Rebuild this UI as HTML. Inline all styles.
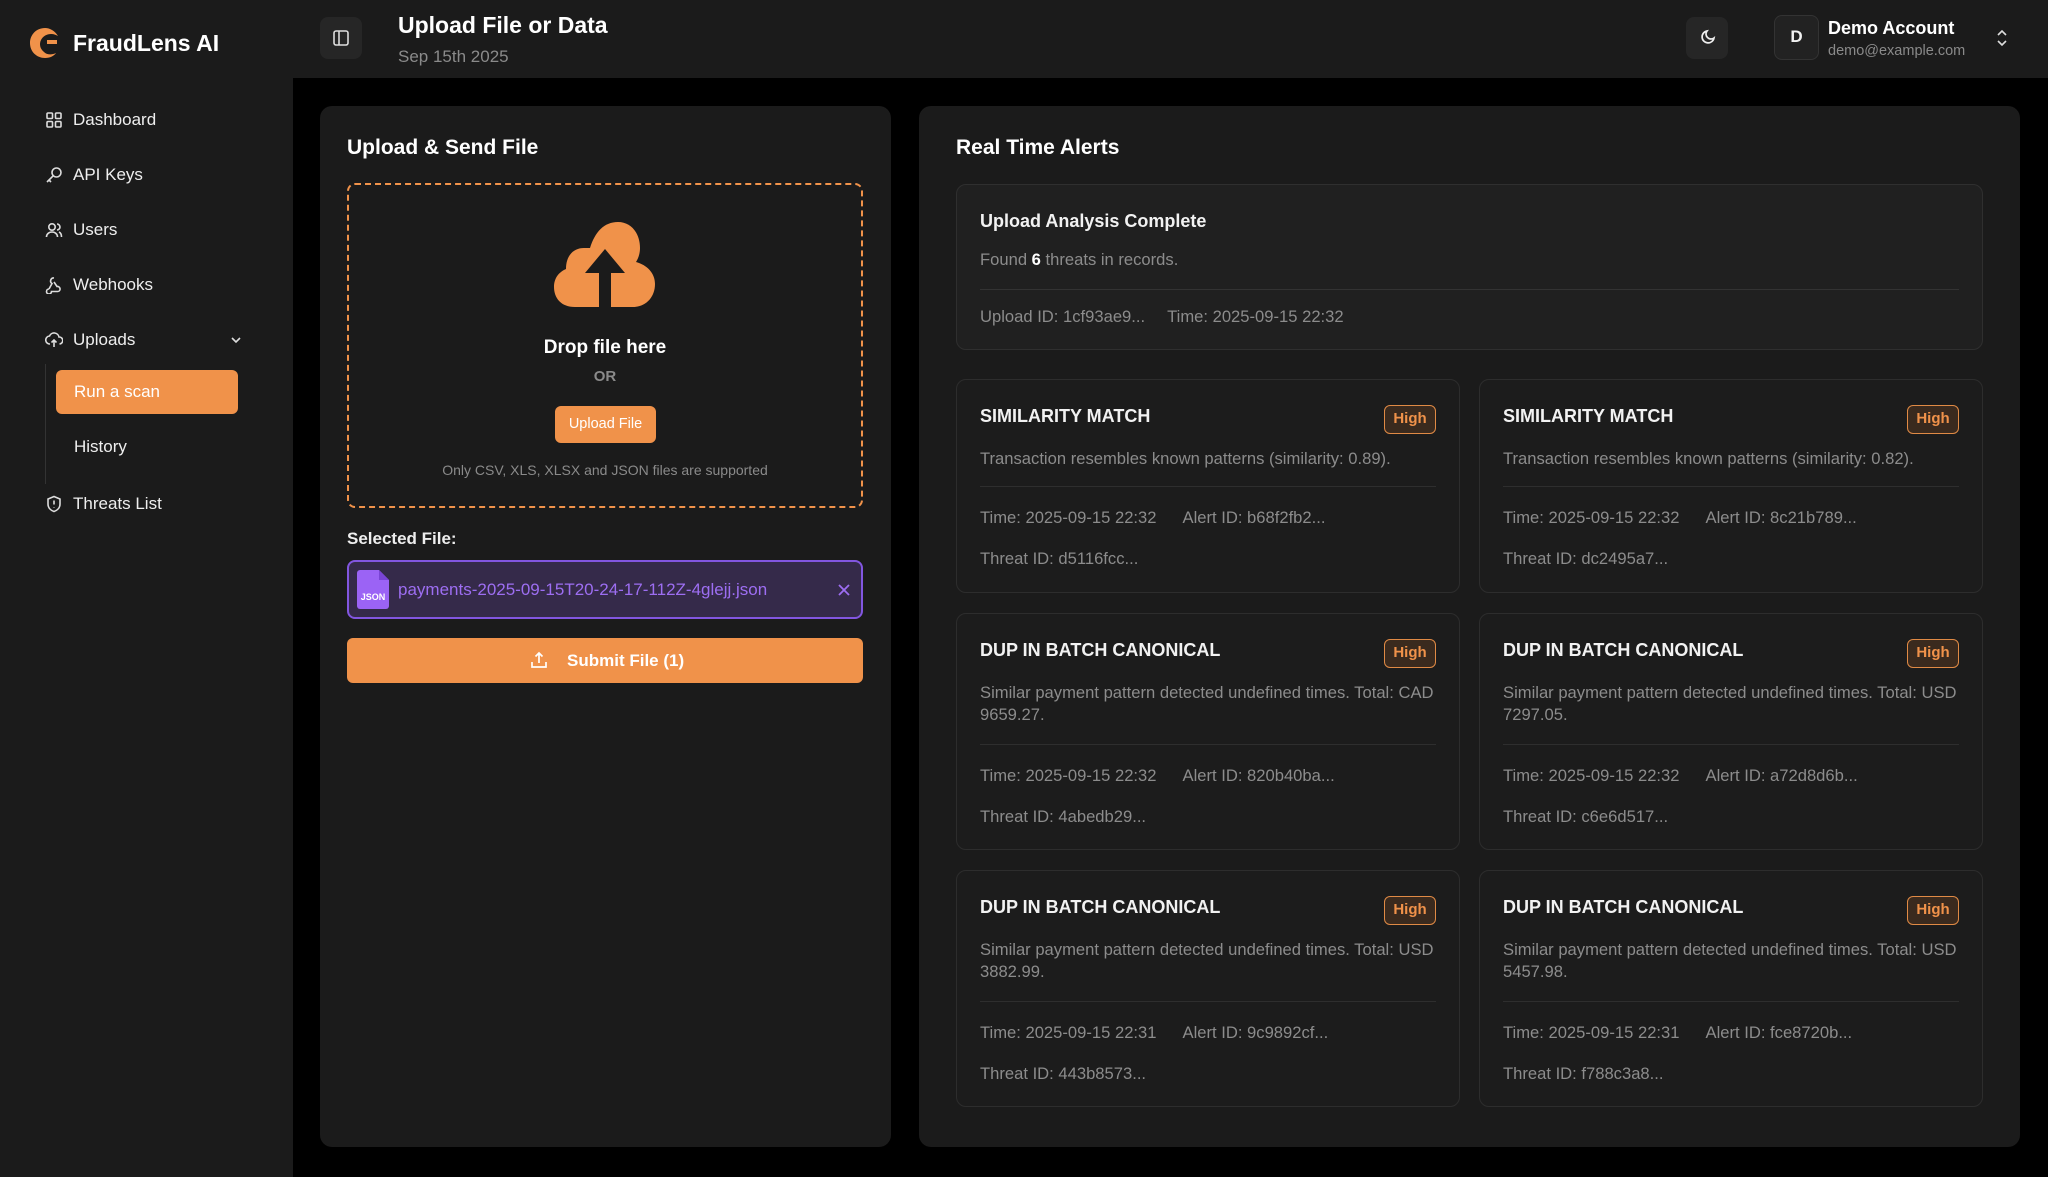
<!DOCTYPE html>
<html><head><meta charset="utf-8"><style>
*{box-sizing:border-box;margin:0;padding:0}
body{width:2048px;height:1177px;background:#000;font-family:"Liberation Sans",sans-serif;color:#f2f2f2;position:relative;overflow:hidden}
.a{position:absolute}
.side{left:0;top:0;width:293px;height:1177px;background:#1b1b1b}
.top{left:293px;top:0;width:1755px;height:78px;background:#1b1b1b}
.nav{left:73px;font-size:17px;color:#eee;transform:translateY(-50%)}
.ni{left:45px;transform:translateY(-50%)}
.card{background:#1b1b1b;border-radius:12px}
.al{background:#1c1c1c;border:1.5px solid #2d2d2d;border-radius:10px;width:504px}
.al .t{position:absolute;left:23px;top:26px;font-size:18px;font-weight:bold;color:#f2f2f2}
.al .b{position:absolute;right:23px;top:25px;width:52px;height:29px;border:1.5px solid #e08a45;background:#3a2a1e;color:#f0924a;font-size:15px;font-weight:bold;border-radius:6px;text-align:center;line-height:26px}
.al .d{position:absolute;left:23px;right:20px;top:68px;font-size:16.6px;color:#8c8c8c;line-height:22px}
.al .hr{position:absolute;left:23px;right:23px;height:1px;background:#2e2e2e}
.al .m{position:absolute;left:23px;font-size:16.6px;color:#8c8c8c}
.al .m span{margin-right:26px}
</style></head><body>
<div class="a side"></div>
<div class="a top"></div>
<svg class="a" style="left:27px;top:25px" width="36" height="36" viewBox="0 0 36 36"><path d="M18 3C9 3 3 10 3 18c0 9 7 15 15 15 5 0 9-2 11-5-4 2-9 2-12-1-4-3-5-8-3-12 2-4 6-6 10-6 3 0 5 1 7 2-3-5-8-8-13-8z" fill="#f0924a"/><path d="M20 15h10v4H20z" fill="#f0924a"/></svg>
<div class="a" style="left:73px;top:30px;font-size:23px;font-weight:bold;color:#fff">FraudLens AI</div>
<svg class="ni a" style="top:120px" width="18" height="18" viewBox="0 0 18 18" fill="none" stroke="#ddd" stroke-width="1.6"><rect x="2" y="2" width="5.5" height="5.5" rx="1"/><rect x="10.5" y="2" width="5.5" height="5.5" rx="1"/><rect x="2" y="10.5" width="5.5" height="5.5" rx="1"/><rect x="10.5" y="10.5" width="5.5" height="5.5" rx="1"/></svg>
<div class="a nav" style="top:120px">Dashboard</div>
<svg class="ni a" style="top:175px" width="18" height="18" viewBox="0 0 18 18" fill="none" stroke="#ddd" stroke-width="1.6"><circle cx="11.5" cy="6.5" r="4.5"/><path d="M8.3 9.7L2 16M4 14l2 2"/></svg>
<div class="a nav" style="top:175px">API Keys</div>
<svg class="ni a" style="top:230px" width="18" height="18" viewBox="0 0 18 18" fill="none" stroke="#ddd" stroke-width="1.6"><circle cx="7" cy="6" r="3.2"/><path d="M1.5 16c0-3 2.5-5 5.5-5s5.5 2 5.5 5M12 3a3 3 0 010 6M14 11c1.5.7 2.5 2.5 2.5 5"/></svg>
<div class="a nav" style="top:230px">Users</div>
<svg class="ni a" style="top:285px" width="18" height="18" viewBox="0 0 18 18" fill="none" stroke="#ddd" stroke-width="1.6"><path d="M9 2a3 3 0 00-2 5.5L4 13M4 13a2.5 2.5 0 102.5 2.5H13M13 15.5a2.5 2.5 0 10-1-5L9 6"/></svg>
<div class="a nav" style="top:285px">Webhooks</div>
<svg class="ni a" style="top:340px" width="18" height="18" viewBox="0 0 18 18" fill="none" stroke="#ddd" stroke-width="1.6"><path d="M5 13a4 4 0 01-.5-8A5 5 0 0114 6a3.5 3.5 0 01.5 7M9 16V9M6.5 11.5L9 9l2.5 2.5"/></svg>
<div class="a nav" style="top:340px">Uploads</div>
<svg class="a" style="left:230px;top:334px" width="12" height="12" viewBox="0 0 12 12" fill="none" stroke="#ddd" stroke-width="1.6"><path d="M2 4l4 4 4-4"/></svg>
<div class="a" style="left:45px;top:364px;width:1px;height:120px;background:#333"></div>
<div class="a" style="left:56px;top:370px;width:182px;height:44px;background:#f0924a;border-radius:6px"></div>
<div class="a nav" style="left:74px;top:392px;color:#fff">Run a scan</div>
<div class="a nav" style="left:74px;top:447px">History</div>
<svg class="ni a" style="top:504px" width="18" height="18" viewBox="0 0 18 18" fill="none" stroke="#ddd" stroke-width="1.6"><path d="M9 1.5l6 2.5v5c0 4-3 6.5-6 7.5-3-1-6-3.5-6-7.5V4z"/><path d="M9 5.5v4M9 12v.5"/></svg>
<div class="a nav" style="top:504px">Threats List</div>
<div class="a" style="left:320px;top:17px;width:42px;height:42px;background:#262626;border-radius:8px"></div>
<svg class="a" style="left:332px;top:29px" width="18" height="18" viewBox="0 0 18 18" fill="none" stroke="#ddd" stroke-width="1.6"><rect x="2" y="2" width="14" height="14" rx="2"/><path d="M7 2v14"/></svg>
<div class="a" style="left:398px;top:12px;font-size:23px;font-weight:bold;color:#fff">Upload File or Data</div>
<div class="a" style="left:398px;top:47px;font-size:17px;color:#8a8a8a">Sep 15th 2025</div>
<div class="a" style="left:1686px;top:17px;width:42px;height:42px;background:#262626;border-radius:8px"></div>
<svg class="a" style="left:1697px;top:28px" width="20" height="20" viewBox="0 0 20 20" fill="none" stroke="#eee" stroke-width="1.7"><path d="M10 3a6 6 0 107 7 5 5 0 01-7-7z"/></svg>
<div class="a" style="left:1774px;top:15px;width:45px;height:45px;background:#222;border:1.5px solid #333;border-radius:8px;text-align:center;line-height:42px;font-weight:bold;font-size:17px">D</div>
<div class="a" style="left:1828px;top:18px;font-size:18px;font-weight:bold;color:#fff">Demo Account</div>
<div class="a" style="left:1828px;top:43px;font-size:14.5px;color:#8a8a8a">demo@example.com</div>
<svg class="a" style="left:1995px;top:28px" width="14" height="20" viewBox="0 0 14 20" fill="none" stroke="#ddd" stroke-width="1.6"><path d="M3 7l4-4 4 4M3 13l4 4 4-4"/></svg>
<div class="a card" style="left:320px;top:106px;width:571px;height:1041px"></div>
<div class="a" style="left:347px;top:136px;font-size:21px;font-weight:bold;color:#fff">Upload &amp; Send File</div>
<div class="a" style="left:347px;top:183px;width:516px;height:325px;border:2.5px dashed #f0924a;border-radius:8px"></div>
<svg class="a" style="left:553px;top:221px" width="104" height="87" viewBox="0 0 104 87"><path d="M30 86H22C8 86 1 77 1 66c0-9 5-15 12-18 0-14 8-21 18-21h6C42 11 51 1 65 1c13 0 22 11 22 26 0 6-2 11-4 14 11 3 19 11 19 22 0 13-9 23-22 23H58V52h14L52 28 32 52h14v34z" fill="#f0924a"/></svg>
<div class="a" style="left:347px;width:516px;top:337px;text-align:center;font-size:19px;font-weight:bold;color:#fff">Drop file here</div>
<div class="a" style="left:347px;width:516px;top:368px;text-align:center;font-size:15px;font-weight:bold;color:#8a8a8a">OR</div>
<div class="a" style="left:555px;top:406px;width:101px;height:37px;background:#f0924a;border-radius:6px;text-align:center;line-height:37px;font-size:14.5px;color:#fff">Upload File</div>
<div class="a" style="left:347px;width:516px;top:462px;text-align:center;font-size:14px;color:#8a8a8a">Only CSV, XLS, XLSX and JSON files are supported</div>
<div class="a" style="left:347px;top:529px;font-size:17px;font-weight:bold;color:#eee">Selected File:</div>
<div class="a" style="left:347px;top:560px;width:516px;height:59px;background:#352a4a;border:2px solid #8256e0;border-radius:8px"></div>
<svg class="a" style="left:357px;top:570px" width="32" height="39" viewBox="0 0 32 39"><path d="M3 0h19l10 10v26a3 3 0 01-3 3H3a3 3 0 01-3-3V3a3 3 0 013-3z" fill="#9b63f5"/><path d="M22 0v10h10z" fill="#7a44d6"/><text x="16" y="30" font-size="9" font-weight="bold" fill="#fff" text-anchor="middle" font-family="Liberation Sans">JSON</text></svg>
<div class="a" style="left:398px;top:580px;font-size:17px;color:#9d6ef2">payments-2025-09-15T20-24-17-112Z-4glejj.json</div>
<svg class="a" style="left:836px;top:582px" width="16" height="16" viewBox="0 0 16 16" fill="none" stroke="#9d6ef2" stroke-width="1.8"><path d="M3 3l10 10M13 3L3 13"/></svg>
<div class="a" style="left:347px;top:638px;width:516px;height:45px;background:#f0924a;border-radius:6px"></div>
<svg class="a" style="left:530px;top:651px" width="18" height="18" viewBox="0 0 18 18" fill="none" stroke="#fff" stroke-width="1.7"><path d="M9 12V2M5.5 5.5L9 2l3.5 3.5M2 11v5h14v-5"/></svg>
<div class="a" style="left:567px;top:651px;font-size:17px;font-weight:bold;color:#fff">Submit File (1)</div>
<div class="a card" style="left:919px;top:106px;width:1101px;height:1041px"></div>
<div class="a" style="left:956px;top:136px;font-size:21px;font-weight:bold;color:#fff">Real Time Alerts</div>
<div class="a" style="left:956px;top:184px;width:1027px;height:166px;background:#202020;border:1.5px solid #2f2f2f;border-radius:10px">
<div class="a" style="left:23px;top:26px;font-size:18px;font-weight:bold;color:#f2f2f2">Upload Analysis Complete</div>
<div class="a" style="left:23px;top:65px;font-size:16.6px;color:#8c8c8c">Found <b style="color:#fff">6</b> threats in records.</div>
<div class="a" style="left:23px;right:23px;top:104px;height:1px;background:#333"></div>
<div class="a" style="left:23px;top:122px;font-size:16.6px;color:#8c8c8c">Upload ID: 1cf93ae9...<span style="margin-left:22px">Time: 2025-09-15 22:32</span></div>
</div>

<div class="a al" style="left:956px;top:379px;height:214px"><div class="t">SIMILARITY MATCH</div><div class="b">High</div><div class="d">Transaction resembles known patterns (similarity: 0.89).</div><div class="hr" style="top:106px"></div><div class="m" style="top:128px"><span>Time: 2025-09-15 22:32</span>Alert ID: b68f2fb2...</div><div class="m" style="top:169px">Threat ID: d5116fcc...</div></div>
<div class="a al" style="left:1479px;top:379px;height:214px"><div class="t">SIMILARITY MATCH</div><div class="b">High</div><div class="d">Transaction resembles known patterns (similarity: 0.82).</div><div class="hr" style="top:106px"></div><div class="m" style="top:128px"><span>Time: 2025-09-15 22:32</span>Alert ID: 8c21b789...</div><div class="m" style="top:169px">Threat ID: dc2495a7...</div></div>

<div class="a al" style="left:956px;top:613px;height:237px"><div class="t">DUP IN BATCH CANONICAL</div><div class="b">High</div><div class="d">Similar payment pattern detected undefined times. Total: CAD 9659.27.</div><div class="hr" style="top:130px"></div><div class="m" style="top:152px"><span>Time: 2025-09-15 22:32</span>Alert ID: 820b40ba...</div><div class="m" style="top:193px">Threat ID: 4abedb29...</div></div>
<div class="a al" style="left:1479px;top:613px;height:237px"><div class="t">DUP IN BATCH CANONICAL</div><div class="b">High</div><div class="d">Similar payment pattern detected undefined times. Total: USD 7297.05.</div><div class="hr" style="top:130px"></div><div class="m" style="top:152px"><span>Time: 2025-09-15 22:32</span>Alert ID: a72d8d6b...</div><div class="m" style="top:193px">Threat ID: c6e6d517...</div></div>

<div class="a al" style="left:956px;top:870px;height:237px"><div class="t">DUP IN BATCH CANONICAL</div><div class="b">High</div><div class="d">Similar payment pattern detected undefined times. Total: USD 3882.99.</div><div class="hr" style="top:130px"></div><div class="m" style="top:152px"><span>Time: 2025-09-15 22:31</span>Alert ID: 9c9892cf...</div><div class="m" style="top:193px">Threat ID: 443b8573...</div></div>
<div class="a al" style="left:1479px;top:870px;height:237px"><div class="t">DUP IN BATCH CANONICAL</div><div class="b">High</div><div class="d">Similar payment pattern detected undefined times. Total: USD 5457.98.</div><div class="hr" style="top:130px"></div><div class="m" style="top:152px"><span>Time: 2025-09-15 22:31</span>Alert ID: fce8720b...</div><div class="m" style="top:193px">Threat ID: f788c3a8...</div></div>
</body></html>
